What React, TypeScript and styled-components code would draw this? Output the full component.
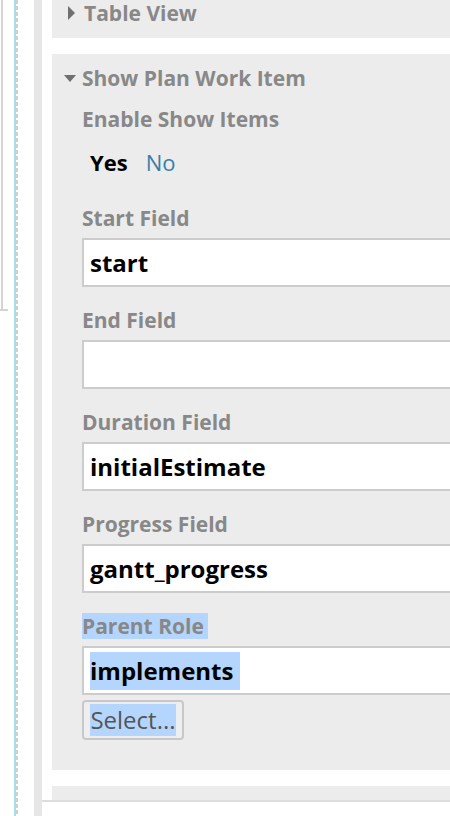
import React from 'react';
import styled, { createGlobalStyle } from 'styled-components';

const GlobalStyle = createGlobalStyle`
    html, body {
        margin: 0;
        padding: 0;
        background: #ffffff;
    }

    body {
        font-family: 'Open Sans', Lato, sans-serif;
    }
`;

interface IField {
    label: string;
    value: string;
    selected?: boolean;
}

const fields: IField[] = [
    { label: 'Start Field', value: 'start' },
    { label: 'End Field', value: '' },
    { label: 'Duration Field', value: 'initialEstimate' },
    { label: 'Progress Field', value: 'gantt_progress' },
    { label: 'Parent Role', value: 'implements', selected: true },
];

const App: React.FC = () => {
    return (
        <>
            <GlobalStyle />
            <Page>
                <LeftColumn>
                    <OuterBox />
                    <Guide />
                </LeftColumn>
                <Strip />
                <Main>
                    <Section variant='header'>
                        <Heading>
                            <Caret direction='right' />
                            Table View
                        </Heading>
                    </Section>

                    <Section variant='open'>
                        <Heading>
                            <Caret direction='down' />
                            Show Plan Work Item
                        </Heading>
                        <Body>
                            <Label>Enable Show Items</Label>
                            <Toggle>
                                <ToggleOption active>Yes</ToggleOption>
                                <ToggleOption>No</ToggleOption>
                            </Toggle>

                            {fields.map((field, index) => (
                                <Field key={field.label} last={index === fields.length - 1}>
                                    <Label>
                                        <LabelSelection selected={field.selected}>{field.label}</LabelSelection>
                                    </Label>
                                    <Input>
                                        <ValueSelection selected={field.selected}>{field.value}</ValueSelection>
                                    </Input>
                                </Field>
                            ))}

                            <SelectButton>
                                <ButtonSelection selected>Select...</ButtonSelection>
                            </SelectButton>
                        </Body>
                    </Section>

                    <Section variant='peek' />
                </Main>
            </Page>
        </>
    );
};

const Page = styled.div`
    display: flex;
    width: 450px;
    height: 816px;
    overflow: hidden;
`;

const LeftColumn = styled.div`
    display: flex;
    align-items: flex-start;
    width: 34px;
    flex-shrink: 0;
`;

const OuterBox = styled.div`
    width: 8px;
    height: 309px;
    border-bottom: 2px solid #d4d4d4;
    background: linear-gradient(to right, transparent 1px, #d4d4d4 1px, #d4d4d4 3px, transparent 3px);
    flex-shrink: 0;
`;

const Guide = styled.div`
    margin-left: 6px;
    width: 4px;
    height: 100%;
    background:
        linear-gradient(to right, #a6dcec 2px, transparent 2px),
        repeating-linear-gradient(to bottom, #cfcfcf 0, #cfcfcf 4px, transparent 4px, transparent 6px);
`;

const Strip = styled.div`
    width: 8px;
    flex-shrink: 0;
    background: #e6e6e6;
`;

const Main = styled.div`
    flex: 1;
    display: flex;
    flex-direction: column;
    gap: 16px;
    align-self: flex-start;
    padding-left: 10px;
    border-bottom: 2px solid #dddddd;
`;

const sectionPadding = {
    header: '1px 0 13px',
    open: '12px 0 30px',
    peek: '14px 0 0',
};

const Section = styled.div<{ variant: 'header' | 'open' | 'peek' }>`
    background: #ececec;
    padding: ${(p) => sectionPadding[p.variant]};
`;

const Heading = styled.div`
    display: flex;
    align-items: center;
    height: 24px;
    padding-left: 12px;
    font-size: 21px;
    font-weight: 700;
    color: #888888;
    white-space: nowrap;
`;

const Caret = styled.span<{ direction: 'right' | 'down' }>`
    width: 0;
    height: 0;
    margin-right: ${(p) => (p.direction === 'down' ? '6px' : '9px')};
    margin-left: ${(p) => (p.direction === 'right' ? '4px' : '0')};
    border-style: solid;
    border-color: transparent;
    ${(p) =>
        p.direction === 'down'
            ? 'border-width: 7px 6px 0 6px; border-top-color: #6f6f6f;'
            : 'border-width: 7px 0 7px 7px; border-left-color: #6f6f6f;'}
`;

const Body = styled.div`
    display: flex;
    flex-direction: column;
    padding: 17px 0 0 30px;
`;

const Label = styled.div`
    display: flex;
    align-items: center;
    height: 24px;
    line-height: 24px;
    font-size: 21px;
    font-weight: 700;
    color: #888888;
    white-space: nowrap;
`;

const Toggle = styled.div`
    display: flex;
    gap: 18px;
    height: 24px;
    margin: 19px 0 32px 8px;
    align-items: center;
`;

const ToggleOption = styled.span<{ active?: boolean }>`
    font-size: 22px;
    font-weight: ${(p) => (p.active ? 700 : 400)};
    color: ${(p) => (p.active ? '#000000' : '#3a7ea8')};
`;

const Field = styled.div<{ last?: boolean }>`
    display: flex;
    flex-direction: column;
    gap: 8px;
    margin-bottom: ${(p) => (p.last ? '5px' : '21px')};
`;

const Input = styled.div`
    display: flex;
    align-items: center;
    height: 45px;
    padding-left: 6px;
    background: #ffffff;
    border: 2px solid #cccccc;
    border-right: none;
    font-size: 24px;
    font-weight: 700;
    color: #000000;
    white-space: nowrap;
`;

const Selectable = styled.span<{ selected?: boolean }>`
    display: inline-block;
    background: ${(p) => (p.selected ? '#b4d5fd' : 'transparent')};
`;

const LabelSelection = styled(Selectable)`
    line-height: 26px;
    padding-right: 4px;
`;

const ValueSelection = styled(Selectable)`
    line-height: 38px;
    padding-right: ${(p) => (p.selected ? '7px' : '0')};
`;

const ButtonSelection = styled(Selectable)`
    line-height: 32px;
`;

const SelectButton = styled.div`
    display: flex;
    align-items: center;
    justify-content: center;
    width: 98px;
    height: 36px;
    background: #eeeeee;
    border: 2px solid #c8c8c8;
    border-radius: 4px;
    font-size: 24px;
    color: #555555;
`;

export default App;
